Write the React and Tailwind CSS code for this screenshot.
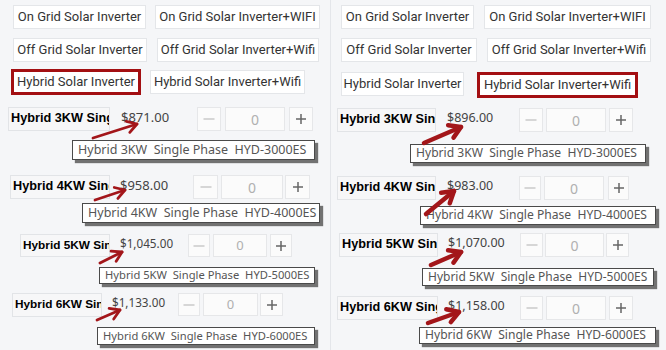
import React from "react";

function Btn({ text, cls, active }) {
  return (
    <div
      className={
        "flex items-center justify-center bg-white text-[13px] text-[#333] whitespace-nowrap font-['Roboto',sans-serif] " +
        (active ? "border-[3px] border-[#a30f12] h-[26px] " : "border border-[#e4e6e9] h-[24px] ") +
        cls
      }
    >
      {text}
    </div>
  );
}

function Arrow({ x1, y1, x2, y2, w }) {
  const ang = Math.atan2(y2 - y1, x2 - x1);
  const L = w > 3.5 ? 13 : 11;
  const a1 = ang + Math.PI - 0.55;
  const a2 = ang + Math.PI + 0.55;
  const p1 = [x2 + L * Math.cos(a1), y2 + L * Math.sin(a1)];
  const p2 = [x2 + L * Math.cos(a2), y2 + L * Math.sin(a2)];
  return (
    <g stroke="#a3161a" strokeWidth={w} strokeLinecap="round" strokeLinejoin="round" fill="none">
      <line x1={x1} y1={y1} x2={x2} y2={y2} />
      <polyline points={`${p1[0]},${p1[1]} ${x2},${y2} ${p2[0]},${p2[1]}`} />
    </g>
  );
}

function ProductRow({ r }) {
  return (
    <div className={"relative flex items-start " + r.rowCls}>
      <div
        className={
          "overflow-hidden whitespace-nowrap border border-[#e2e4e7] bg-[#f7f7f8] font-bold text-black font-['Liberation_Sans',Arial,sans-serif] flex items-center pl-[2px] " +
          r.nameCls
        }
      >
        {r.name}
      </div>
      <div className={"text-[#444] font-['Noto_Sans',sans-serif] leading-none pt-[4px] whitespace-nowrap " + r.priceCls}>
        {r.price}
      </div>
      <div className={"flex items-center justify-center bg-[#fbfbfb] border border-[#e6e7e9] " + r.minusCls}>
        <svg width="12" height="12" viewBox="0 0 12 12">
          <line x1="0.5" y1="6" x2="11.5" y2="6" stroke="#c6c6c6" strokeWidth="1.4" />
        </svg>
      </div>
      <div
        className={
          "flex items-center justify-center bg-[#fbfbfb] border border-[#e6e7e9] text-[#b0b0b0] font-['Noto_Sans',sans-serif] " +
          r.inputCls
        }
      >
        0
      </div>
      <div className={"flex items-center justify-center bg-[#fbfbfb] border border-[#e6e7e9] " + r.plusCls}>
        <svg width="12" height="12" viewBox="0 0 12 12">
          <line x1="1" y1="6" x2="11" y2="6" stroke="#666" strokeWidth="1.5" />
          <line x1="6" y1="1" x2="6" y2="11" stroke="#666" strokeWidth="1.5" />
        </svg>
      </div>
      <div
        className={
          "absolute z-10 flex items-center overflow-hidden bg-white border border-[#4a4a4a] text-[#555] whitespace-pre font-['Noto_Sans',sans-serif] shadow-[3px_3px_1px_rgba(70,70,70,0.75)] pl-[5px] " +
          r.tipCls
        }
      >
        {r.tip}
      </div>
    </div>
  );
}

const leftRows = [
  {
    name: "Hybrid 3KW Single Phase",
    price: "$871.00",
    tip: "Hybrid 3KW  Single Phase  HYD-3000ES",
    rowCls: "mt-[12px] h-[24px]",
    nameCls: "ml-[8px] w-[102px] h-[24px] text-[12.7px]",
    priceCls: "ml-[11px] w-[76px] text-[13px]",
    minusCls: "w-[24px] h-[24px]",
    inputCls: "ml-[4px] w-[60px] h-[24px] text-[14px]",
    plusCls: "ml-[4px] w-[24px] h-[24px]",
    tipCls: "left-[72px] top-[33px] w-[243px] h-[20px] text-[12.5px]",
  },
  {
    name: "Hybrid 4KW Single Phase",
    price: "$958.00",
    tip: "Hybrid 4KW  Single Phase  HYD-4000ES",
    rowCls: "mt-[44px] h-[24px]",
    nameCls: "ml-[10px] w-[100px] h-[24px] text-[12.7px]",
    priceCls: "ml-[10px] w-[73px] text-[13px]",
    minusCls: "w-[25px] h-[24px]",
    inputCls: "ml-[3px] w-[62px] h-[24px] text-[14px]",
    plusCls: "ml-[2px] w-[25px] h-[24px]",
    tipCls: "left-[82px] top-[28px] w-[238px] h-[20px] text-[12.5px]",
  },
  {
    name: "Hybrid 5KW Single Phase",
    price: "$1,045.00",
    tip: "Hybrid 5KW  Single Phase  HYD-5000ES",
    rowCls: "mt-[35px] h-[23px]",
    nameCls: "ml-[20px] w-[90px] h-[23px] text-[11.8px]",
    priceCls: "ml-[10px] w-[68px] text-[11.7px]",
    minusCls: "w-[22px] h-[23px]",
    inputCls: "ml-[3px] w-[54px] h-[23px] text-[13px]",
    plusCls: "ml-[3px] w-[22px] h-[23px]",
    tipCls: "left-[99px] top-[33px] w-[216px] h-[17px] text-[11.2px]",
  },
  {
    name: "Hybrid 6KW Single Phase",
    price: "$1,133.00",
    tip: "Hybrid 6KW  Single Phase  HYD-6000ES",
    rowCls: "mt-[36px] h-[23px]",
    nameCls: "ml-[12px] w-[90px] h-[24px] text-[11.8px]",
    priceCls: "ml-[10px] w-[66px] text-[11.7px]",
    minusCls: "w-[22px] h-[23px]",
    inputCls: "ml-[3px] w-[55px] h-[23px] text-[13px]",
    plusCls: "ml-[2px] w-[23px] h-[23px]",
    tipCls: "left-[97px] top-[34px] w-[218px] h-[18px] text-[11.2px]",
  },
];

const rightRows = [
  {
    name: "Hybrid 3KW Single Phase",
    price: "$896.00",
    tip: "Hybrid 3KW  Single Phase  HYD-3000ES",
    rowCls: "mt-[10px] h-[24px]",
    nameCls: "ml-[6px] w-[99px] h-[24px] text-[12.7px]",
    priceCls: "ml-[11px] w-[72px] text-[12.5px]",
    minusCls: "w-[24px] h-[24px]",
    inputCls: "ml-[3px] w-[60px] h-[24px] text-[14px]",
    plusCls: "ml-[3px] w-[24px] h-[24px]",
    tipCls: "left-[79px] top-[36px] w-[236px] h-[19px] text-[12.1px]",
  },
  {
    name: "Hybrid 4KW Single Phase",
    price: "$983.00",
    tip: "Hybrid 4KW  Single Phase  HYD-4000ES",
    rowCls: "mt-[44px] h-[24px]",
    nameCls: "ml-[6px] w-[99px] h-[24px] text-[12.7px]",
    priceCls: "ml-[11px] w-[72px] text-[12.5px]",
    minusCls: "w-[22px] h-[24px]",
    inputCls: "ml-[3px] w-[60px] h-[24px] text-[14px]",
    plusCls: "ml-[4px] w-[21px] h-[24px]",
    tipCls: "left-[89px] top-[30px] w-[236px] h-[19px] text-[12.1px]",
  },
  {
    name: "Hybrid 5KW Single Phase",
    price: "$1,070.00",
    tip: "Hybrid 5KW  Single Phase  HYD-5000ES",
    rowCls: "mt-[33px] h-[24px]",
    nameCls: "ml-[8px] w-[99px] h-[24px] text-[12.7px]",
    priceCls: "ml-[10px] w-[72px] text-[12.5px]",
    minusCls: "w-[23px] h-[24px]",
    inputCls: "ml-[2px] w-[59px] h-[24px] text-[14px]",
    plusCls: "ml-[2px] w-[23px] h-[24px]",
    tipCls: "left-[91px] top-[35px] w-[232px] h-[18px] text-[12px]",
  },
  {
    name: "Hybrid 6KW Single Phase",
    price: "$1,158.00",
    tip: "Hybrid 6KW  Single Phase  HYD-6000ES",
    rowCls: "mt-[39px] h-[24px]",
    nameCls: "ml-[6px] w-[101px] h-[24px] text-[12.7px]",
    priceCls: "ml-[10px] w-[72px] text-[12.5px]",
    minusCls: "w-[23px] h-[24px]",
    inputCls: "ml-[3px] w-[60px] h-[24px] text-[14px]",
    plusCls: "ml-[3px] w-[24px] h-[24px]",
    tipCls: "left-[88px] top-[31px] w-[237px] h-[17px] text-[12.1px]",
  },
];

const leftArrows = [
  [93, 138, 137, 124],
  [95, 200, 125, 190],
  [100, 263, 122, 252],
  [97, 320, 120, 310],
];
const rightArrows = [
  [93, 143, 130, 127],
  [95, 214, 123, 191],
  [100, 265, 130, 252],
  [97, 323, 128, 312],
];

export default function App() {
  return (
    <div className="flex w-[666px] h-[350px] overflow-hidden bg-[#f5f6f8]">
      {/* Left panel */}
      <div className="relative w-[331px] h-[350px] border-r border-[#e4e6ea] shrink-0">
        <div className="flex flex-col pt-[5px]">
          <div className="flex pl-[13px] gap-[9px]">
            <Btn text="On Grid Solar Inverter" cls="w-[133px]" />
            <Btn text="On Grid Solar Inverter+WIFI" cls="w-[165px]" />
          </div>
          <div className="flex pl-[13px] gap-[10px] mt-[9px]">
            <Btn text="Off Grid Solar Inverter" cls="w-[134px]" />
            <Btn text="Off Grid Solar Inverter+Wifi" cls="w-[162px]" />
          </div>
          <div className="flex items-center pl-[11px] gap-[9px] mt-[7px]">
            <Btn text="Hybrid Solar Inverter" cls="w-[130px]" active />
            <Btn text="Hybrid Solar Inverter+Wifi" cls="w-[155px]" />
          </div>
        </div>
        {leftRows.map((r) => (
          <ProductRow key={r.name + r.price} r={r} />
        ))}
        <svg className="absolute left-0 top-0 z-20 pointer-events-none" width="331" height="350">
          {leftArrows.map((a, i) => (
            <Arrow key={i} x1={a[0]} y1={a[1]} x2={a[2]} y2={a[3]} w={2.8} />
          ))}
        </svg>
      </div>
      {/* Right panel */}
      <div className="relative w-[335px] h-[350px] shrink-0">
        <div className="flex flex-col pt-[5px]">
          <div className="flex pl-[10px] gap-[10px]">
            <Btn text="On Grid Solar Inverter" cls="w-[133px]" />
            <Btn text="On Grid Solar Inverter+WIFI" cls="w-[167px]" />
          </div>
          <div className="flex pl-[10px] gap-[10px] mt-[9px]">
            <Btn text="Off Grid Solar Inverter" cls="w-[136px]" />
            <Btn text="Off Grid Solar Inverter+Wifi" cls="w-[164px]" />
          </div>
          <div className="flex items-start pl-[10px] gap-[13px] mt-[10px]">
            <Btn text="Hybrid Solar Inverter" cls="w-[123px]" />
            <Btn text="Hybrid Solar Inverter+Wifi" cls="w-[161px]" active />
          </div>
        </div>
        {rightRows.map((r) => (
          <ProductRow key={r.name + r.price} r={r} />
        ))}
        <svg className="absolute left-0 top-0 z-20 pointer-events-none" width="335" height="350">
          {rightArrows.map((a, i) => (
            <Arrow key={i} x1={a[0]} y1={a[1]} x2={a[2]} y2={a[3]} w={4.5} />
          ))}
        </svg>
      </div>
    </div>
  );
}
